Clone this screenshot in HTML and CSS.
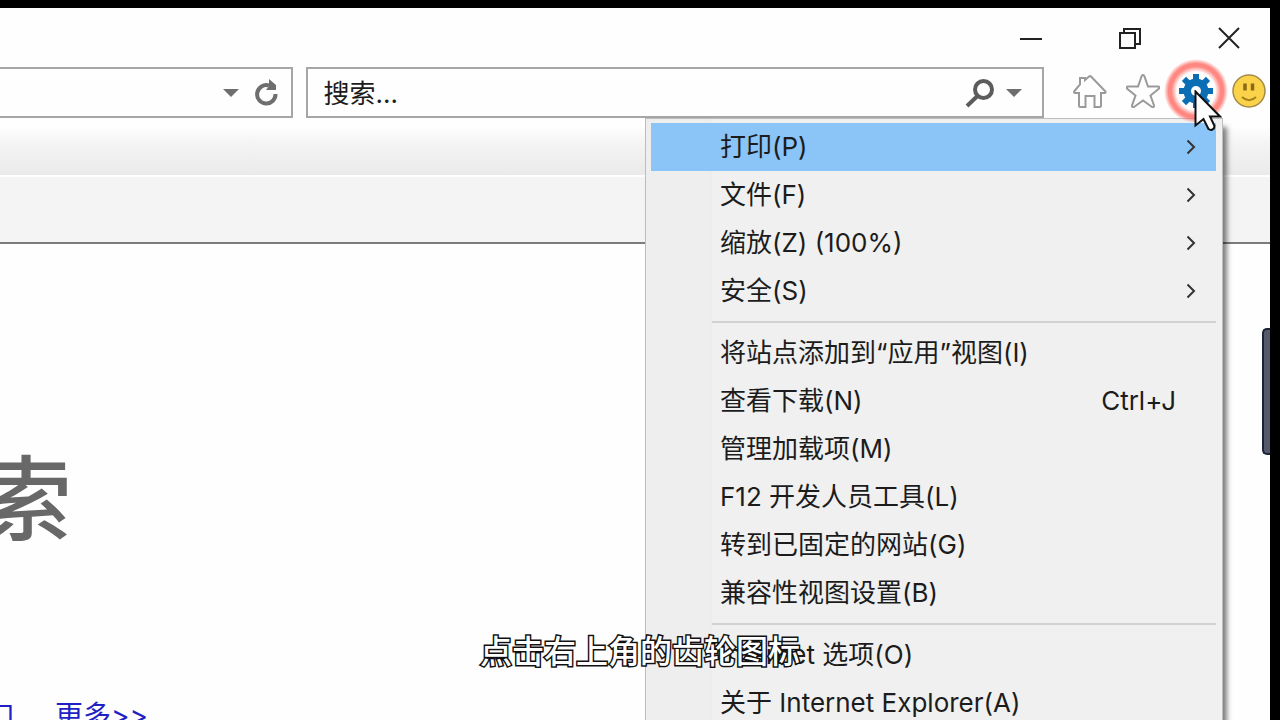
FILE: index.html
```
<!DOCTYPE html>
<html lang="zh-CN">
<head>
  <meta charset="UTF-8" />
  <meta name="viewport" content="width=device-width, initial-scale=1.0"/>
  <title>Internet Explorer</title>
  <link rel="stylesheet" href="styles.css">
</head>
<body>

<div class="window">
  <header class="titlebar">
    <button type="button" aria-label="最小化">
      <svg viewBox="0 0 24 24"><path d="M1 12h22"/></svg>
    </button>
    <button type="button" aria-label="还原">
      <svg viewBox="0 0 24 24"><path d="M2 6h15v15H2zM6 6V2h16v15h-5"/></svg>
    </button>
    <button type="button" aria-label="关闭">
      <svg viewBox="0 0 24 24"><path d="M2 1l20 20M22 1L2 21"/></svg>
    </button>
  </header>

  <div class="toolbar">
    <div class="field address">
      <input type="text" aria-label="地址">
      <button type="button" class="arrow" aria-label="地址列表">
        <svg viewBox="0 0 16 10"><path d="M0 1h16L8 9z"/></svg>
      </button>
      <button type="button" class="refresh" aria-label="刷新">
        <svg viewBox="0 0 24 28">
          <path class="line" d="M14 6.500A9.200 9.200 0 1 0 20.500 15"/>
          <path class="solid" d="M14 0l7 6v5h-10l3-4z"/>
        </svg>
      </button>
    </div>
    <div class="field search">
      <input type="text" aria-label="搜索" placeholder="搜索...">
      <button type="button" class="find" aria-label="查找">
        <svg viewBox="0 0 30 30"><circle cx="18.500" cy="11.500" r="8.500"/><path d="M12.500 18L2 28"/></svg>
      </button>
      <button type="button" class="arrow" aria-label="搜索选项">
        <svg viewBox="0 0 16 10"><path d="M0 1h16L8 9z"/></svg>
      </button>
    </div>
    <div class="tools">
      <button type="button" aria-label="主页">
        <svg viewBox="0 0 34 34">
          <path class="outline" d="M6 19v12.500q0 1.500 1.500 1.500h5V22h9v11h5q1.500 0 1.500-1.500V19h3.500q2-.5.5-2L18 2.500q-1-1-2 0L12 6V4H7v6.500L1.500 17q-1.200 1.500.5 2z"/>
        </svg>
      </button>
      <button type="button" aria-label="收藏夹">
        <svg viewBox="0 0 34 34">
          <path class="outline" d="M17 1q1 0 1.500 1.500L22 12.500h10q2.500.5.5 2.500l-8 6.500 3.500 10q0 2.500-2 1.500l-9-6.500L8 33q-2 1-2-1.500l3.500-10L1.500 15q-2-2 .5-2.500h10l3.500-10Q16 1 17 1z"/>
        </svg>
      </button>
      <div class="gear">
        <button type="button" aria-label="工具" aria-haspopup="true" aria-expanded="true">
          <svg viewBox="-17 -17 34 34">
            <g fill="#0b6db3">
              <path d="M-3-17h6v34h-6z"/>
              <path d="M-3-17h6v34h-6z" transform="rotate(45)"/>
              <path d="M-3-17h6v34h-6z" transform="rotate(90)"/>
              <path d="M-3-17h6v34h-6z" transform="rotate(135)"/>
              <circle r="12.500"/>
            </g>
            <circle r="5" fill="#fefefe"/>
          </svg>
        </button>
        <span class="click-ring"></span>
        <svg class="cursor" viewBox="0 0 28 42">
          <path d="M1.500 1.500v34l8-6.500 5 10q2 1.500 4 .5t2-3.500L16 26.500h10z"/>
        </svg>
      </div>
      <button type="button" aria-label="反馈">
        <svg viewBox="0 0 34 34">
          <circle cx="17" cy="17" r="16" fill="#fbd34b" stroke="#a58b48" stroke-width="1.500"/>
          <path d="M13 9.500v7M20.500 9.500v7" stroke="#8a6a14" stroke-width="3.500" fill="none"/>
          <path d="M10 23q7 6.500 14 0" stroke="#a8801c" stroke-width="2" fill="none"/>
        </svg>
      </button>
    </div>
  </div>

  <div class="tabs"></div>
  <div class="commands"></div>

  <main>
    <h1>索</h1>
    <nav>
      <a href="#">口</a>
      <a href="#">更多&gt;&gt;</a>
    </nav>
    <div class="side-tab"></div>
  </main>

  <div class="menu" role="menu">
    <button type="button" role="menuitem" class="active">打印(P)<svg viewBox="0 0 10 16"><path d="M1.500 1.500L8 8l-6.500 6.500"/></svg></button>
    <button type="button" role="menuitem">文件(F)<svg viewBox="0 0 10 16"><path d="M1.500 1.500L8 8l-6.500 6.500"/></svg></button>
    <button type="button" role="menuitem">缩放(Z) (100%)<svg viewBox="0 0 10 16"><path d="M1.500 1.500L8 8l-6.500 6.500"/></svg></button>
    <button type="button" role="menuitem">安全(S)<svg viewBox="0 0 10 16"><path d="M1.500 1.500L8 8l-6.500 6.500"/></svg></button>
    <hr>
    <button type="button" role="menuitem">将站点添加到“应用”视图(I)</button>
    <button type="button" role="menuitem">查看下载(N)<kbd>Ctrl+J</kbd></button>
    <button type="button" role="menuitem">管理加载项(M)</button>
    <button type="button" role="menuitem">F12 开发人员工具(L)</button>
    <button type="button" role="menuitem">转到已固定的网站(G)</button>
    <button type="button" role="menuitem">兼容性视图设置(B)</button>
    <hr>
    <button type="button" role="menuitem">Internet 选项(O)</button>
    <button type="button" role="menuitem">关于 Internet Explorer(A)</button>
  </div>
</div>

<p class="subtitle">点击右上角的齿轮图标</p>

</body>
</html>
```
FILE: styles.css
```
* {
  box-sizing: border-box;
}

body {
  margin: 0;
  height: 100vh;
  overflow: hidden;
  border-top: 8px solid #000;
  border-right: 10px solid #000;
  font-family: Inter, "Noto Sans CJK SC", sans-serif;
  font-size: 26px;
  color: #1c1c1c;
}

button {
  display: flex;
  align-items: center;
  padding: 0;
  border: none;
  background: none;
  font: inherit;
  color: inherit;
}

svg {
  display: block;
  width: 100%;
}

.window {
  position: relative;
  display: flex;
  flex-direction: column;
  height: 100%;
  overflow: hidden;
  background: #fefefe;
}

.titlebar {
  display: flex;
  flex-shrink: 0;
  justify-content: flex-end;
  align-items: center;
  gap: 75px;
  height: 59px;
  padding: 2px 29px 0 0;
}

.titlebar button {
  width: 24px;
}

.titlebar path {
  fill: none;
  stroke: #222;
  stroke-width: 2;
}

.toolbar {
  display: flex;
  flex-shrink: 0;
  height: 51px;
}

.field {
  display: flex;
  align-items: center;
  min-width: 0;
  border: 2px solid #a6a6a6;
}

.field input {
  flex: 1;
  width: 0;
  min-width: 0;
  height: 100%;
  padding: 2px 0 0;
  border: none;
  outline: none;
  background: none;
  font: inherit;
}

.field input::placeholder {
  color: #1c1c1c;
}

.address {
  flex: 2;
  gap: 16px;
  margin-right: 13px;
  padding-right: 12px;
  border-left: none;
}

.search {
  flex: 5;
  gap: 11px;
  padding: 0 20px 0 15px;
}

.arrow {
  width: 16px;
}

.arrow path,
.refresh .solid {
  fill: #6e6e6e;
}

.refresh {
  width: 24px;
}

.refresh .line {
  fill: none;
  stroke: #6e6e6e;
  stroke-width: 4;
}

.find {
  width: 30px;
}

.find svg {
  fill: none;
  stroke: #5c5c5c;
  stroke-width: 4;
}

.tools {
  display: flex;
  align-items: center;
  gap: 19px;
  padding: 0 4px 4px 29px;
}

.tools button {
  width: 34px;
}

.outline {
  fill: #fefefe;
  stroke: #9a9a9a;
  stroke-width: 2;
}

.gear {
  position: relative;
  z-index: 2;
}

.click-ring {
  position: absolute;
  top: -15px;
  left: -15px;
  width: 64px;
  height: 64px;
  border-radius: 50%;
  background: radial-gradient(circle closest-side, transparent 60%, #ff6a62cc 77%, #ff6a62cc 86%, transparent 100%);
}

.cursor {
  position: absolute;
  top: 16px;
  left: 15px;
  width: 28px;
  fill: #fefefe;
  stroke: #111;
  stroke-width: 2;
}

.tabs {
  flex-shrink: 0;
  height: 59px;
  background: linear-gradient(#fefefe 15%, #f4f4f4 45%, #eaeaea);
  border-bottom: 2px solid #fefefe;
}

.commands {
  flex-shrink: 0;
  height: 67px;
  background: #f4f4f4;
  border-bottom: 2px solid #7c7c7c;
}

main {
  position: relative;
  flex: 1;
}

h1 {
  display: flex;
  justify-content: flex-end;
  width: 72px;
  margin: 0;
  padding-top: 190px;
  font-size: 92px;
  line-height: 132px;
  font-weight: 500;
  color: #686868;
}

nav {
  display: flex;
  gap: 40px;
  margin: 130px 0 0 -13px;
  font-size: 28px;
  line-height: 40px;
}

nav a {
  color: #1f1fc4;
  text-decoration: none;
}

.side-tab {
  position: absolute;
  top: 84px;
  right: 0;
  width: 8px;
  height: 127px;
  border: 2px solid #1c2438;
  border-right: none;
  border-radius: 5px 0 0 5px;
  background: #535a6b;
}

.menu {
  position: absolute;
  top: 110px;
  right: 47px;
  width: 578px;
  padding: 4px 6px 4px 5px;
  border: 1px solid #bdbdbd;
  background: linear-gradient(90deg, #eeeeee 64px, #e8e8e8 64px, #f0f0f0 66px);
  box-shadow: 5px 8px 5px -1px #00000080;
}

.menu button {
  width: 100%;
  height: 48px;
  padding: 0 20px 0 69px;
  line-height: 48px;
  white-space: nowrap;
}

.menu .active {
  background: #8bc4f7;
}

.menu svg {
  width: 10px;
  margin-left: auto;
  fill: none;
  stroke: #333;
  stroke-width: 2;
}

.menu kbd {
  margin: 0 20px 0 auto;
  font: inherit;
}

.menu hr {
  height: 2px;
  margin: 6px 0 6px 61px;
  border: none;
  background: #d2d2d2;
}

.subtitle {
  position: absolute;
  bottom: 47px;
  left: 0;
  width: 100%;
  margin: 0;
  font-family: "Noto Sans CJK SC", sans-serif;
  font-size: 32px;
  font-weight: 500;
  line-height: 48px;
  text-align: center;
  color: #fff;
  -webkit-text-stroke: 3px #111;
  paint-order: stroke fill;
}
```
